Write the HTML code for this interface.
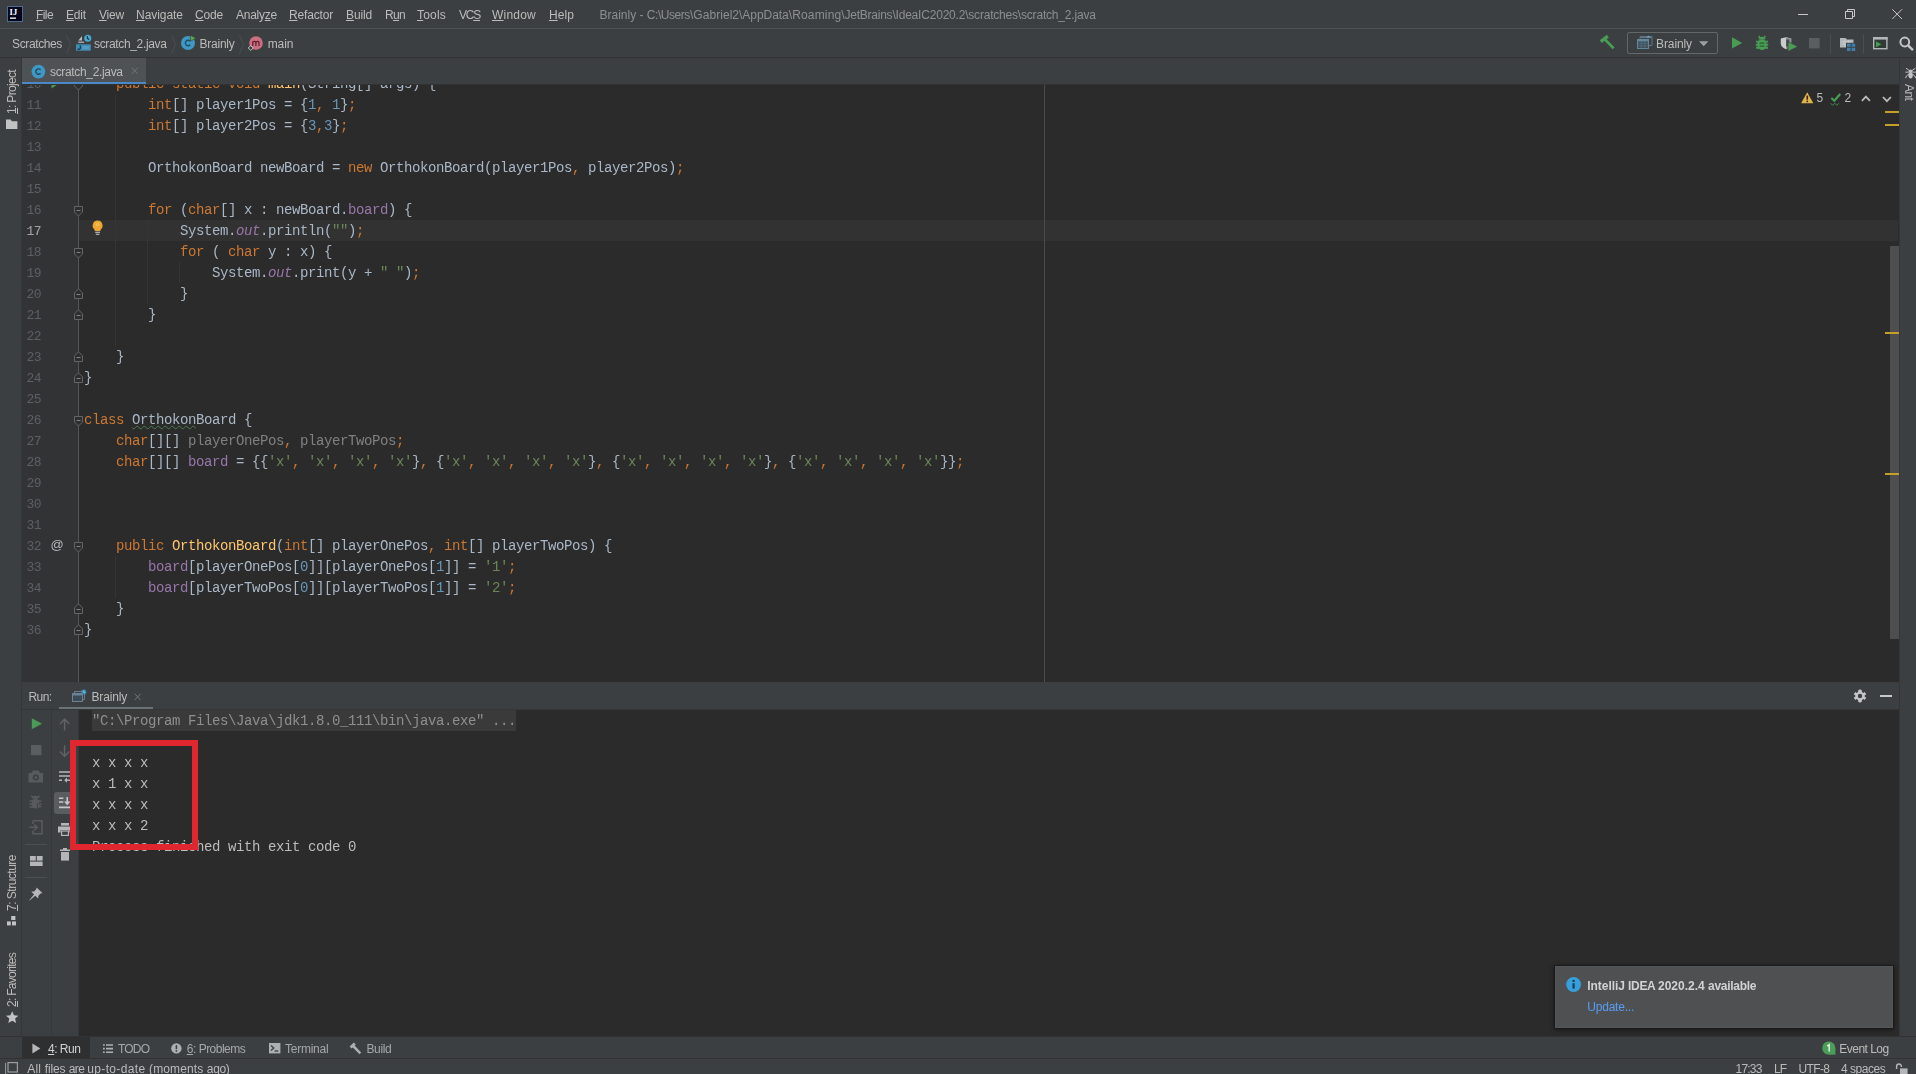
<!DOCTYPE html>
<html><head><meta charset="utf-8"><title>scratch_2.java</title>
<style>
html,body{margin:0;padding:0;background:#3c3f41;overflow:hidden;}
html{width:1916px;height:1074px;}
body{width:1916px;height:1074px;overflow:hidden;position:relative;font-family:"Liberation Sans",sans-serif;font-size:12px;color:#bbbbbb;}
.a{position:absolute;}
.t{filter:blur(0.3px);position:absolute;white-space:pre;line-height:16px;height:16px;}
.t u{text-decoration:underline;text-underline-offset:1px;}
.m{font-family:"Liberation Mono",monospace;font-size:14px;letter-spacing:-0.4014px;}
.ln{filter:blur(0.3px);position:absolute;left:20px;width:21px;text-align:right;height:21px;line-height:21px;color:#5d6063;font-family:"Liberation Mono",monospace;font-size:13px;letter-spacing:-0.55px;}
.cl{filter:blur(0.35px);position:absolute;left:84px;height:21px;line-height:21px;white-space:pre;color:#a9b7c6;font-family:"Liberation Mono",monospace;font-size:14px;letter-spacing:-0.4014px;}
.k{color:#cc7832}.n{color:#6897bb}.s{color:#6a8759}.f{color:#9876aa}.fi{color:#9876aa;font-style:italic}.d{color:#ffc66d}.g{color:#808080}
.w{text-decoration:underline wavy #4d7a4d;text-decoration-thickness:1px;text-underline-offset:1px;}
.co{filter:blur(0.35px);position:absolute;left:92px;height:21px;line-height:21px;white-space:pre;color:#bbbbbb;font-family:"Liberation Mono",monospace;font-size:14px;letter-spacing:-0.4014px;}
svg{position:absolute;overflow:visible;}
.v{position:absolute;white-space:pre;line-height:16px;height:16px;font-size:12px;color:#bbbbbb;transform-origin:0 0;}

</style></head>
<body>
<div class="a" style="left:0px;top:28px;width:1916px;height:1px;background:#515354;"></div>
<div class="a" style="left:0px;top:57px;width:1916px;height:1px;background:#323232;"></div>
<div class="a" style="left:22px;top:58px;width:124px;height:27px;background:#4e5254;"></div>
<div class="a" style="left:22px;top:82px;width:124px;height:3px;background:#4a88c7;"></div>
<div class="a" style="left:22px;top:84px;width:1877px;height:1px;background:#323232;"></div>
<div class="a" style="left:21px;top:58px;width:1px;height:979px;background:#343638;"></div>
<div class="a" style="left:1899px;top:58px;width:1px;height:979px;background:#343638;"></div>
<div class="a" style="left:22px;top:85px;width:1877px;height:597px;background:#2b2b2b;overflow:hidden;">
<div class="a" style="left:0;top:0;width:56px;height:598px;background:#313335;"></div>
<div class="a" style="left:56px;top:0;width:1px;height:598px;background:#555555;"></div>
<div class="a" style="left:57px;top:135px;width:1819px;height:21px;background:#323232;"></div>
<div class="a" style="left:1022px;top:0;width:1px;height:598px;background:#4b4b4b;"></div>
</div>
<div class="a" style="left:0;top:85px;width:1898px;height:598px;overflow:hidden;">
<div class="ln" style="top:-11px;color:#5d6063">10</div>
<div class="cl" style="top:-11px">    <span class="k">public static void </span><span class="d">main</span>(String[] args) {</div>
<div class="ln" style="top:10px;color:#5d6063">11</div>
<div class="cl" style="top:10px">        <span class="k">int</span>[] player1Pos = {<span class="n">1</span><span class="k">, </span><span class="n">1</span>}<span class="k">;</span></div>
<div class="ln" style="top:31px;color:#5d6063">12</div>
<div class="cl" style="top:31px">        <span class="k">int</span>[] player2Pos = {<span class="n">3</span><span class="k">,</span><span class="n">3</span>}<span class="k">;</span></div>
<div class="ln" style="top:52px;color:#5d6063">13</div>
<div class="ln" style="top:73px;color:#5d6063">14</div>
<div class="cl" style="top:73px">        OrthokonBoard newBoard = <span class="k">new </span>OrthokonBoard(player1Pos<span class="k">, </span>player2Pos)<span class="k">;</span></div>
<div class="ln" style="top:94px;color:#5d6063">15</div>
<div class="ln" style="top:115px;color:#5d6063">16</div>
<div class="cl" style="top:115px">        <span class="k">for </span>(<span class="k">char</span>[] x : newBoard.<span class="f">board</span>) {</div>
<div class="ln" style="top:136px;color:#a4a3a3">17</div>
<div class="cl" style="top:136px">            System.<span class="fi">out</span>.println(<span class="s">""</span>)<span class="k">;</span></div>
<div class="ln" style="top:157px;color:#5d6063">18</div>
<div class="cl" style="top:157px">            <span class="k">for </span>( <span class="k">char </span>y : x) {</div>
<div class="ln" style="top:178px;color:#5d6063">19</div>
<div class="cl" style="top:178px">                System.<span class="fi">out</span>.print(y + <span class="s">" "</span>)<span class="k">;</span></div>
<div class="ln" style="top:199px;color:#5d6063">20</div>
<div class="cl" style="top:199px">            }</div>
<div class="ln" style="top:220px;color:#5d6063">21</div>
<div class="cl" style="top:220px">        }</div>
<div class="ln" style="top:241px;color:#5d6063">22</div>
<div class="ln" style="top:262px;color:#5d6063">23</div>
<div class="cl" style="top:262px">    }</div>
<div class="ln" style="top:283px;color:#5d6063">24</div>
<div class="cl" style="top:283px">}</div>
<div class="ln" style="top:304px;color:#5d6063">25</div>
<div class="ln" style="top:325px;color:#5d6063">26</div>
<div class="cl" style="top:325px"><span class="k">class </span><span class="w">Orthokon</span>Board {</div>
<div class="ln" style="top:346px;color:#5d6063">27</div>
<div class="cl" style="top:346px">    <span class="k">char</span>[][] <span class="g">playerOnePos</span><span class="k">, </span><span class="g">playerTwoPos</span><span class="k">;</span></div>
<div class="ln" style="top:367px;color:#5d6063">28</div>
<div class="cl" style="top:367px">    <span class="k">char</span>[][] <span class="f">board</span> = {{<span class="s">'x'</span><span class="k">, </span><span class="s">'x'</span><span class="k">, </span><span class="s">'x'</span><span class="k">, </span><span class="s">'x'</span>}<span class="k">, </span>{<span class="s">'x'</span><span class="k">, </span><span class="s">'x'</span><span class="k">, </span><span class="s">'x'</span><span class="k">, </span><span class="s">'x'</span>}<span class="k">, </span>{<span class="s">'x'</span><span class="k">, </span><span class="s">'x'</span><span class="k">, </span><span class="s">'x'</span><span class="k">, </span><span class="s">'x'</span>}<span class="k">, </span>{<span class="s">'x'</span><span class="k">, </span><span class="s">'x'</span><span class="k">, </span><span class="s">'x'</span><span class="k">, </span><span class="s">'x'</span>}}<span class="k">;</span></div>
<div class="ln" style="top:388px;color:#5d6063">29</div>
<div class="ln" style="top:409px;color:#5d6063">30</div>
<div class="ln" style="top:430px;color:#5d6063">31</div>
<div class="ln" style="top:451px;color:#5d6063">32</div>
<div class="cl" style="top:451px">    <span class="k">public </span><span class="d">OrthokonBoard</span>(<span class="k">int</span>[] playerOnePos<span class="k">, </span><span class="k">int</span>[] playerTwoPos) {</div>
<div class="ln" style="top:472px;color:#5d6063">33</div>
<div class="cl" style="top:472px">        <span class="f">board</span>[playerOnePos[<span class="n">0</span>]][playerOnePos[<span class="n">1</span>]] = <span class="s">'1'</span><span class="k">;</span></div>
<div class="ln" style="top:493px;color:#5d6063">34</div>
<div class="cl" style="top:493px">        <span class="f">board</span>[playerTwoPos[<span class="n">0</span>]][playerTwoPos[<span class="n">1</span>]] = <span class="s">'2'</span><span class="k">;</span></div>
<div class="ln" style="top:514px;color:#5d6063">35</div>
<div class="cl" style="top:514px">    }</div>
<div class="ln" style="top:535px;color:#5d6063">36</div>
<div class="cl" style="top:535px">}</div>
</div>
<div class="a" style="left:115px;top:94px;width:1px;height:252px;background:#353535;"></div>
<div class="a" style="left:147px;top:220px;width:1px;height:84px;background:#353535;"></div>
<div class="a" style="left:179px;top:262px;width:1px;height:21px;background:#353535;"></div>
<div class="a" style="left:115px;top:556px;width:1px;height:42px;background:#353535;"></div>
<div class="a" style="left:59px;top:707px;width:94px;height:3px;background:#6c7377;"></div>
<div class="a" style="left:22px;top:709px;width:1877px;height:1px;background:#343638;"></div>
<div class="a" style="left:79px;top:710px;width:1820px;height:326px;background:#2b2b2b;"></div>
<div class="a" style="left:51px;top:710px;width:1px;height:326px;background:#353739;"></div>
<div class="a" style="left:78px;top:710px;width:1px;height:326px;background:#353739;"></div>
<div class="a" style="left:92px;top:710px;width:424px;height:21px;background:#3a3a3a;"></div>
<div class="co" style="top:711px;color:#8f8f8f">"C:\Program Files\Java\jdk1.8.0_111\bin\java.exe" ...</div>
<div class="co" style="top:753px;color:#bbbbbb">x x x x</div>
<div class="co" style="top:774px;color:#bbbbbb">x 1 x x</div>
<div class="co" style="top:795px;color:#bbbbbb">x x x x</div>
<div class="co" style="top:816px;color:#bbbbbb">x x x 2</div>
<div class="co" style="top:837px;color:#bbbbbb">Process finished with exit code 0</div>
<div class="a" style="left:0px;top:1036px;width:1916px;height:1px;background:#323232;"></div>
<div class="a" style="left:22px;top:1037px;width:68px;height:21px;background:#2d2f30;"></div>
<div class="a" style="left:0px;top:1058px;width:1916px;height:1px;background:#323232;"></div>
<div class="a" style="left:1555px;top:966px;width:336px;height:60px;background:#4f5052;border:1px solid #54575a;box-shadow:0 0 0 1px rgba(20,20,20,.5),0 1px 5px 1px rgba(0,0,0,.45);"></div>
<div class="a" style="left:1890px;top:246px;width:9px;height:393px;background:#4e4e4e;"></div>
<div class="a" style="left:1885px;top:111px;width:14px;height:2px;background:#c4a02a;"></div>
<div class="a" style="left:1885px;top:124px;width:14px;height:2px;background:#c4a02a;"></div>
<div class="a" style="left:1885px;top:332px;width:14px;height:2px;background:#c4a02a;"></div>
<div class="a" style="left:1885px;top:473px;width:14px;height:2px;background:#c4a02a;"></div>
<span class="t" style="left:36px;top:7px;color:#bbbbbb;font-size:12px;letter-spacing:-0.590px;"><u>F</u>ile</span>
<span class="t" style="left:66px;top:7px;color:#bbbbbb;font-size:12px;letter-spacing:-0.176px;"><u>E</u>dit</span>
<span class="t" style="left:99px;top:7px;color:#bbbbbb;font-size:12px;letter-spacing:-0.203px;"><u>V</u>iew</span>
<span class="t" style="left:136px;top:7px;color:#bbbbbb;font-size:12px;letter-spacing:-0.047px;"><u>N</u>avigate</span>
<span class="t" style="left:195px;top:7px;color:#bbbbbb;font-size:12px;letter-spacing:-0.176px;"><u>C</u>ode</span>
<span class="t" style="left:236px;top:7px;color:#bbbbbb;font-size:12px;letter-spacing:-0.246px;">Analy<u>z</u>e</span>
<span class="t" style="left:289px;top:7px;color:#bbbbbb;font-size:12px;letter-spacing:-0.170px;"><u>R</u>efactor</span>
<span class="t" style="left:346px;top:7px;color:#bbbbbb;font-size:12px;letter-spacing:-0.141px;"><u>B</u>uild</span>
<span class="t" style="left:385px;top:7px;color:#bbbbbb;font-size:12px;letter-spacing:-0.682px;">R<u>u</u>n</span>
<span class="t" style="left:417px;top:7px;color:#bbbbbb;font-size:12px;letter-spacing:0.197px;"><u>T</u>ools</span>
<span class="t" style="left:459px;top:7px;color:#bbbbbb;font-size:12px;letter-spacing:-1.229px;">VC<u>S</u></span>
<span class="t" style="left:492px;top:7px;color:#bbbbbb;font-size:12px;letter-spacing:0.219px;"><u>W</u>indow</span>
<span class="t" style="left:549px;top:7px;color:#bbbbbb;font-size:12px;letter-spacing:0.078px;"><u>H</u>elp</span>
<span class="t" style="left:599.5px;top:7px;color:#8c8f91;font-size:12px;letter-spacing:-0.004px;">Brainly - </span>
<span class="t" style="left:646.8px;top:7px;color:#8c8f91;font-size:12px;letter-spacing:-0.446px;">C:\Users</span>
<span class="t" style="left:689.9px;top:7px;color:#8c8f91;font-size:12px;letter-spacing:0.055px;">\Gabriel2</span>
<span class="t" style="left:739.1px;top:7px;color:#8c8f91;font-size:12px;letter-spacing:-0.056px;">\AppData</span>
<span class="t" style="left:788.7px;top:7px;color:#8c8f91;font-size:12px;letter-spacing:0.155px;">\Roaming</span>
<span class="t" style="left:841.3px;top:7px;color:#8c8f91;font-size:12px;letter-spacing:-0.226px;">\JetBrains</span>
<span class="t" style="left:892.4px;top:7px;color:#8c8f91;font-size:12px;letter-spacing:-0.200px;">\IdeaIC2020.2</span>
<span class="t" style="left:965.2px;top:7px;color:#8c8f91;font-size:12px;letter-spacing:-0.209px;">\scratches</span>
<span class="t" style="left:1017.8px;top:7px;color:#8c8f91;font-size:12px;letter-spacing:-0.181px;">\scratch_2.java</span>
<span class="t" style="left:12px;top:36px;color:#bbbbbb;font-size:12px;letter-spacing:-0.373px;">Scratches</span>
<span class="t" style="left:94px;top:36px;color:#bbbbbb;font-size:12px;letter-spacing:-0.348px;">scratch_2.java</span>
<span class="t" style="left:199.5px;top:36px;color:#bbbbbb;font-size:12px;letter-spacing:-0.241px;">Brainly</span>
<span class="t" style="left:267.7px;top:36px;color:#bbbbbb;font-size:12px;letter-spacing:-0.079px;">main</span>
<span class="t" style="left:1656px;top:36px;color:#bbbbbb;font-size:12px;letter-spacing:-0.098px;">Brainly</span>
<span class="t" style="left:50px;top:64px;color:#bbbbbb;font-size:12px;letter-spacing:-0.334px;">scratch_2.java</span>
<span class="t" style="left:1816.5px;top:90px;color:#bbbbbb;font-size:12px;letter-spacing:-0.688px;">5</span>
<span class="t" style="left:1844.5px;top:90px;color:#bbbbbb;font-size:12px;letter-spacing:-0.188px;">2</span>
<span class="t" style="left:28.6px;top:689px;color:#bbbbbb;font-size:12px;letter-spacing:-0.640px;">Run:</span>
<span class="t" style="left:91.5px;top:689px;color:#bbbbbb;font-size:12px;letter-spacing:-0.141px;">Brainly</span>
<span class="t" style="left:48px;top:1041px;color:#d2d2d2;font-size:12px;letter-spacing:-0.496px;"><u>4</u>: Run</span>
<span class="t" style="left:118px;top:1041px;color:#a5a8aa;font-size:12px;letter-spacing:-0.788px;">TODO</span>
<span class="t" style="left:186.8px;top:1041px;color:#a5a8aa;font-size:12px;letter-spacing:-0.504px;"><u>6</u>: Problems</span>
<span class="t" style="left:285px;top:1041px;color:#a5a8aa;font-size:12px;letter-spacing:-0.245px;">Terminal</span>
<span class="t" style="left:366.4px;top:1041px;color:#a5a8aa;font-size:12px;letter-spacing:-0.338px;">Build</span>
<span class="t" style="left:1839.3px;top:1041px;color:#bbbbbb;font-size:12px;letter-spacing:-0.527px;">Event Log</span>
<span class="t" style="left:27.3px;top:1061px;color:#bbbbbb;font-size:12px;letter-spacing:0.182px;">All </span>
<span class="t" style="left:44.7px;top:1061px;color:#bbbbbb;font-size:12px;letter-spacing:-0.115px;">files </span>
<span class="t" style="left:68.7px;top:1061px;color:#bbbbbb;font-size:12px;letter-spacing:-0.522px;">are </span>
<span class="t" style="left:87.3px;top:1061px;color:#bbbbbb;font-size:12px;letter-spacing:0.341px;">up-to-date </span>
<span class="t" style="left:149.1px;top:1061px;color:#bbbbbb;font-size:12px;letter-spacing:0.113px;">(moments </span>
<span class="t" style="left:206.8px;top:1061px;color:#bbbbbb;font-size:12px;letter-spacing:-0.333px;">ago)</span>
<span class="t" style="left:1735.6px;top:1061px;color:#bbbbbb;font-size:12px;letter-spacing:-0.806px;">17:33</span>
<span class="t" style="left:1774px;top:1061px;color:#bbbbbb;font-size:12px;letter-spacing:-1.008px;">LF</span>
<span class="t" style="left:1798.5px;top:1061px;color:#bbbbbb;font-size:12px;letter-spacing:-0.620px;">UTF-8</span>
<span class="t" style="left:1840.9px;top:1061px;color:#bbbbbb;font-size:12px;letter-spacing:-0.441px;">4 spaces</span>
<span class="t" style="left:1587.3px;top:977.5px;color:#d2d2d2;font-size:12px;font-weight:bold;letter-spacing:-0.060px;">IntelliJ </span>
<span class="t" style="left:1628.1px;top:977.5px;color:#d2d2d2;font-size:12px;font-weight:bold;letter-spacing:-0.332px;">IDEA </span>
<span class="t" style="left:1658px;top:977.5px;color:#d2d2d2;font-size:12px;font-weight:bold;letter-spacing:-0.005px;">2020.2.4 </span>
<span class="t" style="left:1708px;top:977.5px;color:#d2d2d2;font-size:12px;font-weight:bold;letter-spacing:-0.278px;">available</span>
<span class="t" style="left:1587.3px;top:999px;color:#589df6;font-size:12px;letter-spacing:-0.223px;">Update...</span>
<svg style="left:7px;top:6px;" width="16" height="16" viewBox="0 0 16 16"><rect x="0.5" y="0.5" width="15" height="15" fill="#05051c" stroke="#4e6b8e"/><text x="2.6" y="9.2" font-family="Liberation Serif" font-weight="bold" font-size="8.5" fill="#fff">IJ</text><rect x="3" y="11.5" width="6" height="1.3" fill="#fff"/></svg>
<svg style="left:1797px;top:9px;" width="12" height="12" viewBox="0 0 12 12"><path d="M1 5.5H11" stroke="#c8c8c8" stroke-width="1" fill="none"/></svg>
<svg style="left:1845px;top:9px;" width="11" height="11" viewBox="0 0 11 11"><path d="M0.5 2.5H7.5V9.5H0.5Z M2.5 2.5V0.5H9.5V7.5H7.5" stroke="#c8c8c8" stroke-width="1" fill="none"/></svg>
<svg style="left:1892px;top:9px;" width="11" height="11" viewBox="0 0 11 11"><path d="M0.3 0.3L10 10M10 0.3L0.3 10" stroke="#c8c8c8" stroke-width="1" fill="none"/></svg>
<svg style="left:65.5px;top:35px;" width="6" height="19" viewBox="0 0 6 19"><path d="M0.5 0.5L4.5 9.5L0.5 18.5" stroke="#4a4e50" stroke-width="1" fill="none"/></svg>
<svg style="left:170.5px;top:35px;" width="6" height="19" viewBox="0 0 6 19"><path d="M0.5 0.5L4.5 9.5L0.5 18.5" stroke="#4a4e50" stroke-width="1" fill="none"/></svg>
<svg style="left:238.5px;top:35px;" width="6" height="19" viewBox="0 0 6 19"><path d="M0.5 0.5L4.5 9.5L0.5 18.5" stroke="#4a4e50" stroke-width="1" fill="none"/></svg>
<svg style="left:76px;top:34px;" width="16" height="17" viewBox="0 0 16 17"><rect x="0" y="10.3" width="14.8" height="6.4" fill="#3f8db5"/><path d="M4.4 11.4V14.2a1.4 1.4 0 0 1-2.6 .4" stroke="#16384c" stroke-width="1.3" fill="none"/><rect x="6.4" y="12" width="7" height="3.2" fill="#62a9cb" opacity=".55"/><path d="M2.3 6.4L6 2V6.4Z" fill="#b9bcbe"/><rect x="2.2" y="7.6" width="5.8" height="1.2" fill="#b9bcbe"/><circle cx="11.8" cy="4.2" r="3.5" fill="#49a9d2"/><path d="M11.2 2.2L11.6 4.6L13.2 5.6" stroke="#123247" stroke-width="1.2" fill="none"/></svg>
<svg style="left:181px;top:35px;" width="16" height="16" viewBox="0 0 16 16"><circle cx="7" cy="8" r="7" fill="#3f98c3"/><path d="M9.2 6.3A2.7 2.7 0 1 0 9.2 9.7" stroke="#1f4c66" stroke-width="1.4" fill="none"/><path d="M9.5 0.2L15 3.2L9.5 6.2Z" fill="#57a64a" stroke="#3c3f41" stroke-width=".6"/></svg>
<svg style="left:247px;top:35px;" width="17" height="16" viewBox="0 0 17 16"><circle cx="9" cy="8" r="6.8" fill="#cb6e82"/><path d="M5.8 11V6.2M5.8 7.6c.4-1.6 3-1.8 3.1 0V11M8.9 7.6c.4-1.6 3-1.8 3.1 0V11" stroke="#5a1f2a" stroke-width="1.2" fill="none"/><path d="M1.2 13L3.8 10.6L6.2 13L3.8 15.4Z" fill="#3c3f41" stroke="#c4c6c7" stroke-width="1"/></svg>
<svg style="left:1599px;top:33px;" width="17" height="17" viewBox="0 0 17 17"><path d="M1.8 8.6L8.8 3.2" stroke="#499c54" stroke-width="3.4" fill="none"/><path d="M5.6 6L14.6 15.4" stroke="#499c54" stroke-width="2.8" fill="none"/></svg>
<div class="a" style="left:1627px;top:32px;width:89px;height:20px;border:1px solid #646769;border-radius:2px;"></div>
<svg style="left:1637px;top:35px;" width="16" height="14" viewBox="0 0 16 14"><path d="M3 4V1.5H15V10.5H12" fill="none" stroke="#5f7482"/><rect x="3" y="1.5" width="12" height="1.6" fill="#5f7482"/><rect x="0.5" y="4.5" width="11" height="9" fill="#3f4d57" stroke="#64869b"/><rect x="0.5" y="4.5" width="11" height="2" fill="#64869b"/><path d="M1 8.6H11M1 10.8H11M4.2 6.5V13M7.9 6.5V13" stroke="#55748a" stroke-width=".7"/><path d="M11.4 0.4L13.6 2.4H9.2Z" fill="#6aa3c4"/></svg>
<svg style="left:1699px;top:41px;" width="10" height="6" viewBox="0 0 10 6"><path d="M0 0.3H9.4L4.7 5.3Z" fill="#9da0a2"/></svg>
<svg style="left:1731px;top:37px;" width="12" height="12" viewBox="0 0 12 12"><path d="M1 0.3L11.2 5.9L1 11.5Z" fill="#499c54"/></svg>
<svg style="left:1755px;top:35px;" width="14" height="16" viewBox="0 0 14 16"><ellipse cx="7" cy="9.6" rx="4.6" ry="5.4" fill="#499c54"/><path d="M3.6 4.4a3.4 2.6 0 0 1 6.8 0Z" fill="#499c54"/><path d="M1 6.6H13M0.8 9.7H13.2M1 12.8H13" stroke="#499c54" stroke-width="1.9" fill="none"/><path d="M3.6 1L5.6 3.4M10.4 1L8.4 3.4" stroke="#499c54" stroke-width="1.5" fill="none"/><path d="M4.6 8.1H9.4M4.6 11.2H9.4" stroke="#2c5c33" stroke-width="1.3"/></svg>
<svg style="left:1780px;top:37px;" width="19" height="15" viewBox="0 0 19 15"><path d="M0.8 1.6L6 0.2L11.2 1.6V6.5C11.2 9.4 8.8 11 6 12.2C3.2 11 0.8 9.4 0.8 6.5Z" fill="#c9cbcd"/><path d="M6 0.2L11.2 1.6V6.5C11.2 9.4 8.8 11 6 12.2Z" fill="#8d9092"/><path d="M6.2 2.5h3v7h-3z" fill="#3c3f41" opacity=".85"/><path d="M8 4.6L18 9.6L8 14.6Z" fill="#499c54" stroke="#3c3f41" stroke-width=".8"/></svg>
<svg style="left:1809px;top:38px;" width="11" height="11" viewBox="0 0 11 11"><rect x="0" y="0" width="10.6" height="10.4" fill="#5b5e60"/></svg>
<div class="a" style="left:1830px;top:34px;width:1px;height:20px;background:#4b4e50;"></div>
<div class="a" style="left:1863px;top:34px;width:1px;height:20px;background:#4b4e50;"></div>
<svg style="left:1840px;top:37px;" width="16" height="15" viewBox="0 0 16 15"><path d="M0 1H5.5L7 2.6H13.5V10.5H0Z" fill="#b4b7b9"/><path d="M2 4.6H11.5M2 7H11.5M4.8 3.2V10M8.5 3.2V10" stroke="#d6d8d9" stroke-width=".7" opacity=".7"/><rect x="6" y="5.8" width="9.6" height="8.6" fill="#3c3f41"/><rect x="7" y="6.6" width="3.6" height="3.2" fill="#3d7eab"/><rect x="11.6" y="6.6" width="3.6" height="3.2" fill="#3d7eab"/><rect x="7" y="10.8" width="3.6" height="3.2" fill="#3d7eab"/><rect x="11.6" y="10.8" width="3.6" height="3.2" fill="#3d7eab"/></svg>
<svg style="left:1873px;top:37px;" width="15" height="13" viewBox="0 0 15 13"><rect x="0.7" y="0.7" width="13.2" height="11" fill="#2f3b33" stroke="#b4b7b9" stroke-width="1.4"/><rect x="0" y="0" width="14.6" height="2.6" fill="#b4b7b9"/><path d="M3 4.4L8.4 7.3L3 10.2Z" fill="#499c54"/></svg>
<svg style="left:1899px;top:36px;" width="16" height="16" viewBox="0 0 16 16"><circle cx="5.8" cy="6" r="4.4" fill="none" stroke="#c3c5c6" stroke-width="2"/><path d="M9 9.4L14 14.2" stroke="#c3c5c6" stroke-width="2.4"/></svg>
<svg style="left:31px;top:64px;" width="16" height="16" viewBox="0 0 16 16"><circle cx="7.4" cy="7.6" r="6.9" fill="#3f98c3"/><path d="M9.6 5.9A2.7 2.7 0 1 0 9.6 9.3" stroke="#1f4c66" stroke-width="1.4" fill="none"/></svg>
<svg style="left:131px;top:67px;" width="8" height="8" viewBox="0 0 8 8"><path d="M0.7 0.7L6.7 7M6.7 0.7L0.7 7" stroke="#6f7476" stroke-width="1" fill="none"/></svg>
<svg style="left:1801px;top:92px;" width="13" height="12" viewBox="0 0 13 12"><path d="M6.2 0.2L12.3 11.3H0.1Z" fill="#dcb747"/><rect x="5.45" y="3.6" width="1.6" height="4.1" fill="#4a1d12"/><rect x="5.45" y="8.6" width="1.6" height="1.6" fill="#4a1d12"/></svg>
<svg style="left:1830px;top:93px;" width="12" height="15" viewBox="0 0 12 15"><path d="M1.3 5L4.3 7.7L10.2 1" stroke="#499c54" stroke-width="2.2" fill="none"/><path d="M0.6 10.2L2.7 12.4L4.8 10.2L6.9 12.4L9 10.2" stroke="#3f8a4a" stroke-width="1" fill="none"/></svg>
<svg style="left:1861px;top:94.5px;" width="10" height="7" viewBox="0 0 10 7"><path d="M0.9 5.8L4.9 1.6L8.9 5.8" stroke="#b8babb" stroke-width="1.8" fill="none"/></svg>
<svg style="left:1882px;top:95.5px;" width="10" height="7" viewBox="0 0 10 7"><path d="M0.9 1L4.9 5.2L8.9 1" stroke="#b8babb" stroke-width="1.8" fill="none"/></svg>
<div class="a" style="left:0;top:85px;width:200px;height:598px;overflow:hidden;"><div class="a" style="left:0;top:-85px;">
<svg style="left:74px;top:80px;" width="9" height="11" viewBox="0 0 9 11"><path d="M0.5 0.5H8.5V6L4.5 10L0.5 6Z" fill="#2d2e30" stroke="#636567"/><path d="M2.5 4.5H6.5" stroke="#808284"/></svg>
<svg style="left:74px;top:206px;" width="9" height="11" viewBox="0 0 9 11"><path d="M0.5 0.5H8.5V6L4.5 10L0.5 6Z" fill="#2d2e30" stroke="#636567"/><path d="M2.5 4.5H6.5" stroke="#808284"/></svg>
<svg style="left:74px;top:248px;" width="9" height="11" viewBox="0 0 9 11"><path d="M0.5 0.5H8.5V6L4.5 10L0.5 6Z" fill="#2d2e30" stroke="#636567"/><path d="M2.5 4.5H6.5" stroke="#808284"/></svg>
<svg style="left:74px;top:288px;" width="9" height="11" viewBox="0 0 9 11"><path d="M0.5 10.5H8.5V4.8L4.5 0.8L0.5 4.8Z" fill="#2d2e30" stroke="#636567"/><path d="M2.5 6.5H6.5" stroke="#808284"/></svg>
<svg style="left:74px;top:309px;" width="9" height="11" viewBox="0 0 9 11"><path d="M0.5 10.5H8.5V4.8L4.5 0.8L0.5 4.8Z" fill="#2d2e30" stroke="#636567"/><path d="M2.5 6.5H6.5" stroke="#808284"/></svg>
<svg style="left:74px;top:351px;" width="9" height="11" viewBox="0 0 9 11"><path d="M0.5 10.5H8.5V4.8L4.5 0.8L0.5 4.8Z" fill="#2d2e30" stroke="#636567"/><path d="M2.5 6.5H6.5" stroke="#808284"/></svg>
<svg style="left:74px;top:372px;" width="9" height="11" viewBox="0 0 9 11"><path d="M0.5 10.5H8.5V4.8L4.5 0.8L0.5 4.8Z" fill="#2d2e30" stroke="#636567"/><path d="M2.5 6.5H6.5" stroke="#808284"/></svg>
<svg style="left:74px;top:416px;" width="9" height="11" viewBox="0 0 9 11"><path d="M0.5 0.5H8.5V6L4.5 10L0.5 6Z" fill="#2d2e30" stroke="#636567"/><path d="M2.5 4.5H6.5" stroke="#808284"/></svg>
<svg style="left:74px;top:542px;" width="9" height="11" viewBox="0 0 9 11"><path d="M0.5 0.5H8.5V6L4.5 10L0.5 6Z" fill="#2d2e30" stroke="#636567"/><path d="M2.5 4.5H6.5" stroke="#808284"/></svg>
<svg style="left:74px;top:603px;" width="9" height="11" viewBox="0 0 9 11"><path d="M0.5 10.5H8.5V4.8L4.5 0.8L0.5 4.8Z" fill="#2d2e30" stroke="#636567"/><path d="M2.5 6.5H6.5" stroke="#808284"/></svg>
<svg style="left:74px;top:624px;" width="9" height="11" viewBox="0 0 9 11"><path d="M0.5 10.5H8.5V4.8L4.5 0.8L0.5 4.8Z" fill="#2d2e30" stroke="#636567"/><path d="M2.5 6.5H6.5" stroke="#808284"/></svg>
<svg style="left:50.5px;top:78px;" width="9" height="11" viewBox="0 0 9 11"><path d="M0.5 0.5L8 5.5L0.5 10.5Z" fill="#499c54"/></svg>
</div></div>
<svg style="left:92px;top:220px;" width="12" height="16" viewBox="0 0 12 16"><path d="M5.6 0.6a5 5 0 0 1 3.2 8.8l-.6 1.6H3l-.6-1.6A5 5 0 0 1 5.6 0.6Z" fill="#f0a732"/><circle cx="5.6" cy="4.4" r="2" fill="#f6c260" opacity=".7"/><path d="M3.2 12.2H8M3.8 14.2H7.4" stroke="#d0d2d3" stroke-width="1.1"/></svg>
<span class="t" style="left:50.5px;top:537px;font-size:13px;color:#b6b8ba;letter-spacing:0">@</span>
<svg style="left:72px;top:689px;" width="15" height="14" viewBox="0 0 15 14"><rect x="0.5" y="4.5" width="10" height="8" fill="#3c4a54" stroke="#6c8194"/><rect x="0.5" y="4.5" width="10" height="2" fill="#6c8194"/><path d="M2.5 4V2.5H12.5V10.5H11" fill="none" stroke="#6d7b86"/><circle cx="11.8" cy="3" r="2.6" fill="#3a8bb8"/><path d="M11.8 1.6V3.2L12.8 3.8" stroke="#cfe2ee" stroke-width=".7" fill="none"/></svg>
<svg style="left:134px;top:693px;" width="8" height="8" viewBox="0 0 8 8"><path d="M0.7 0.7L6.7 7M6.7 0.7L0.7 7" stroke="#6f7476" stroke-width="1" fill="none"/></svg>
<svg style="left:1853px;top:689px;" width="14" height="14" viewBox="0 0 14 14"><path d="M7 0.3L8.9 1.4L8.9 3.1L10.4 4L11.9 3.1L13.2 5.4L11.7 6.3V7.7L13.2 8.6L11.9 10.9L10.4 10L8.9 10.9V12.6L7 13.7L5.1 12.6V10.9L3.6 10L2.1 10.9L0.8 8.6L2.3 7.7V6.3L0.8 5.4L2.1 3.1L3.6 4L5.1 3.1V1.4Z" fill="#c4c6c7"/><circle cx="7" cy="7" r="2.2" fill="#3c3f41"/></svg>
<div class="a" style="left:1880px;top:695px;width:12px;height:2px;background:#c8c9ca;"></div>
<span class="t" style="left:4.3px;top:114px;transform-origin:0 0;transform:rotate(-90deg);letter-spacing:-0.670px;"><u>1</u>: Project</span>
<span class="t" style="left:4.3px;top:911px;transform-origin:0 0;transform:rotate(-90deg);letter-spacing:-0.504px;"><u>7</u>: Structure</span>
<span class="t" style="left:4.3px;top:1006.5px;transform-origin:0 0;transform:rotate(-90deg);letter-spacing:-0.725px;"><u>2</u>: Favorites</span>
<span class="t" style="left:1917.2px;top:84px;transform-origin:0 0;transform:rotate(90deg);letter-spacing:-0.605px;">Ant</span>
<svg style="left:6px;top:119px;" width="12" height="11" viewBox="0 0 12 11"><path d="M0 0.6H4.6L6 2.2H11.4V10H0Z" fill="#c0c2c3"/></svg>
<svg style="left:7px;top:916px;" width="10" height="10" viewBox="0 0 10 10"><rect x="4.2" y="0" width="4.2" height="4" fill="#c0c2c3"/><rect x="0" y="5.4" width="3.8" height="4" fill="#c0c2c3"/><rect x="5" y="5.4" width="4" height="4" fill="#c0c2c3"/></svg>
<svg style="left:5.5px;top:1011px;" width="13" height="13" viewBox="0 0 13 13"><path d="M6.2 0.2L8 4.3L12.4 4.7L9.1 7.6L10.1 12L6.2 9.7L2.3 12L3.3 7.6L0 4.7L4.4 4.3Z" fill="#c0c2c3"/></svg>
<svg style="left:1904.5px;top:67px;" width="12" height="12" viewBox="0 0 12 12"><ellipse cx="5.6" cy="8.6" rx="2.2" ry="2.8" fill="#c0c2c3"/><circle cx="5.6" cy="4.2" r="1.7" fill="#c0c2c3"/><path d="M5.6 4.5L1 1.2M5.6 4.5L10.4 1.2M5.6 5L0.4 5.2M5.6 5L10.8 5.2M5.6 5.6L1.4 9L0.6 11.2M5.6 5.6L9.8 9L10.8 11.2" stroke="#c0c2c3" stroke-width="1" fill="none"/></svg>
<svg style="left:31px;top:718px;" width="12" height="12" viewBox="0 0 12 12"><path d="M0.8 0.3L11 5.7L0.8 11.2Z" fill="#499c54"/></svg>
<svg style="left:31px;top:745px;" width="11" height="11" viewBox="0 0 11 11"><rect width="10.4" height="10.2" fill="#5b5e60"/></svg>
<svg style="left:28px;top:770px;" width="16" height="13" viewBox="0 0 16 13"><path d="M0.5 3H3.6L5 0.6H10.6L12 3H15V12.4H0.5Z" fill="#585b5d"/><circle cx="7.8" cy="7.4" r="3" fill="#3c3f41"/><circle cx="7.8" cy="7.4" r="1.5" fill="#585b5d"/></svg>
<svg style="left:29px;top:795px;" width="14" height="15" viewBox="0 0 14 15"><ellipse cx="6.4" cy="8.6" rx="3.8" ry="5" fill="#585b5d"/><path d="M3.4 3.4a3 2.6 0 0 1 6 0Z" fill="#585b5d"/><path d="M0.5 6H12.4M0.2 9H12.6M0.5 12H12.4M2.4 0.8L4.2 3M10.4 0.8L8.6 3" stroke="#585b5d" stroke-width="1.4" fill="none"/><path d="M8.4 8.4L13.6 11.2L8.4 14Z" fill="#585b5d" stroke="#3c3f41" stroke-width=".8"/></svg>
<svg style="left:29px;top:820px;" width="14" height="15" viewBox="0 0 14 15"><path d="M4 0.8H13V13.8H4V10.6M4 4V0.8" fill="none" stroke="#585b5d" stroke-width="1.5"/><path d="M0.4 7.3H7.6M5.2 4.4L8.2 7.3L5.2 10.2" fill="none" stroke="#585b5d" stroke-width="1.5"/></svg>
<div class="a" style="left:25px;top:844px;width:22px;height:1px;background:#4d5052;"></div>
<svg style="left:30px;top:856px;" width="13" height="10" viewBox="0 0 13 10"><rect x="0" y="0" width="5.8" height="4.6" fill="#b4b6b8"/><rect x="6.8" y="0" width="5.8" height="4.6" fill="#b4b6b8"/><rect x="0" y="5.6" width="12.6" height="4.4" fill="#b4b6b8"/></svg>
<div class="a" style="left:25px;top:877px;width:22px;height:1px;background:#4d5052;"></div>
<svg style="left:29px;top:887px;" width="14" height="14" viewBox="0 0 14 14"><path d="M7.6 0.4L13.4 6L11.6 6.6L9.4 8.8L9.2 11.6L6.2 8.8L0.6 13.6L0.2 13.2L5 7.6L2.2 4.6L5 4.4L7.2 2.2Z" fill="#b4b6b8"/></svg>
<svg style="left:59px;top:718px;" width="12" height="13" viewBox="0 0 12 13"><path d="M5.6 12.4V1.4M1 6L5.6 1.2L10.2 6" fill="none" stroke="#5f6365" stroke-width="1.5"/></svg>
<svg style="left:59px;top:745px;" width="12" height="13" viewBox="0 0 12 13"><path d="M5.6 0.2V11.2M1 6.6L5.6 11.4L10.2 6.6" fill="none" stroke="#5f6365" stroke-width="1.5"/></svg>
<svg style="left:59px;top:771px;" width="12" height="13" viewBox="0 0 12 13"><path d="M0 1H11.4M0 5H11.4M0 9.2H3" stroke="#b4b6b8" stroke-width="1.6" fill="none"/><path d="M11.4 9.2H6.4" stroke="#b4b6b8" stroke-width="1.4" fill="none"/><path d="M8 6.6L5.2 9.2L8 11.8Z" fill="#b4b6b8"/></svg>
<div class="a" style="left:54px;top:792px;width:22px;height:22px;background:#5a5d5f;border-radius:3px;"></div>
<svg style="left:59px;top:797px;" width="12" height="12" viewBox="0 0 12 12"><path d="M0 1.2H4.4M0 5H4.4M0 10.4H11.4" stroke="#c4c6c7" stroke-width="1.6" fill="none"/><path d="M8.2 0V6" stroke="#c4c6c7" stroke-width="1.6"/><path d="M5 4.6H11.4L8.2 8.2Z" fill="#c4c6c7"/></svg>
<svg style="left:58px;top:823px;" width="14" height="13" viewBox="0 0 14 13"><rect x="3" y="0" width="8" height="2.6" fill="#b4b6b8"/><path d="M0 3.6H14V9.6H11.4V7H2.6V9.6H0Z" fill="#b4b6b8"/><rect x="3.6" y="8" width="6.8" height="4.4" fill="none" stroke="#b4b6b8" stroke-width="1.2"/></svg>
<svg style="left:60px;top:848px;" width="10" height="13" viewBox="0 0 10 13"><path d="M3 0H7V1.4H10V3H0V1.4H3Z" fill="#b4b6b8"/><path d="M1 4H9V12.6H1Z" fill="#b4b6b8"/></svg>
<svg style="left:32px;top:1043px;" width="9" height="11" viewBox="0 0 9 11"><path d="M0.4 0.4L8.4 5.4L0.4 10.4Z" fill="#b4b6b8"/></svg>
<svg style="left:103px;top:1044px;" width="10" height="10" viewBox="0 0 10 10"><path d="M3 1H10M3 4.6H10M3 8.2H10" stroke="#adb0b2" stroke-width="1.6"/><path d="M0 1H1.8M0 4.6H1.8M0 8.2H1.8" stroke="#adb0b2" stroke-width="1.6"/></svg>
<svg style="left:171px;top:1043px;" width="11" height="11" viewBox="0 0 11 11"><circle cx="5.4" cy="5.4" r="5.2" fill="#adb0b2"/><rect x="4.6" y="2.2" width="1.6" height="4" fill="#3c3f41"/><rect x="4.6" y="7.2" width="1.6" height="1.6" fill="#3c3f41"/></svg>
<svg style="left:268.5px;top:1043px;" width="12" height="11" viewBox="0 0 12 11"><rect x="0" y="0" width="11.4" height="10.4" fill="#adb0b2"/><path d="M2 2.4L4.8 5L2 7.6" stroke="#3c3f41" stroke-width="1.3" fill="none"/><path d="M5.6 8H9.2" stroke="#3c3f41" stroke-width="1.3"/></svg>
<svg style="left:349px;top:1042px;" width="13" height="13" viewBox="0 0 13 13"><path d="M0.6 4.6L4.8 0.6L6.8 2.4L5.6 3.6L12.2 10.6L10.6 12.2L3.8 5.4L2.6 6.6Z" fill="#adb0b2"/></svg>
<svg style="left:1822px;top:1041px;" width="14" height="14" viewBox="0 0 14 14"><circle cx="6.8" cy="7" r="6.6" fill="#4c9d59"/><rect x="6.8" y="7" width="6.6" height="6.6" fill="#4c9d59"/><path d="M5.2 5.2L7.2 3.8V10.6" stroke="#d9f2dd" stroke-width="1.5" fill="none"/></svg>
<svg style="left:5px;top:1061px;" width="13" height="13" viewBox="0 0 13 13"><path d="M0.6 2V13" stroke="#9a9da0" stroke-width="1"/><rect x="3" y="1.6" width="9.4" height="9.4" fill="none" stroke="#9a9da0" stroke-width="1.2"/></svg>
<svg style="left:1895px;top:1062px;" width="13" height="12" viewBox="0 0 13 12"><path d="M1.6 7V4.4A2.4 2.4 0 0 1 6.4 4.4V5" fill="none" stroke="#b4b6b8" stroke-width="1.4"/><rect x="5" y="6.4" width="7.6" height="5.6" fill="#b4b6b8"/></svg>
<svg style="left:1565.5px;top:977px;" width="15" height="15" viewBox="0 0 15 15"><circle cx="7.6" cy="7.5" r="7.4" fill="#35a0dc"/><rect x="6.5" y="6.2" width="2.2" height="5.4" fill="#1d3b55"/><rect x="6.5" y="2.9" width="2.2" height="2.1" fill="#1d3b55"/></svg>
<div class="a" style="left:70px;top:740px;width:116px;height:98px;border:6px solid #e0262e;"></div>
</body></html>
